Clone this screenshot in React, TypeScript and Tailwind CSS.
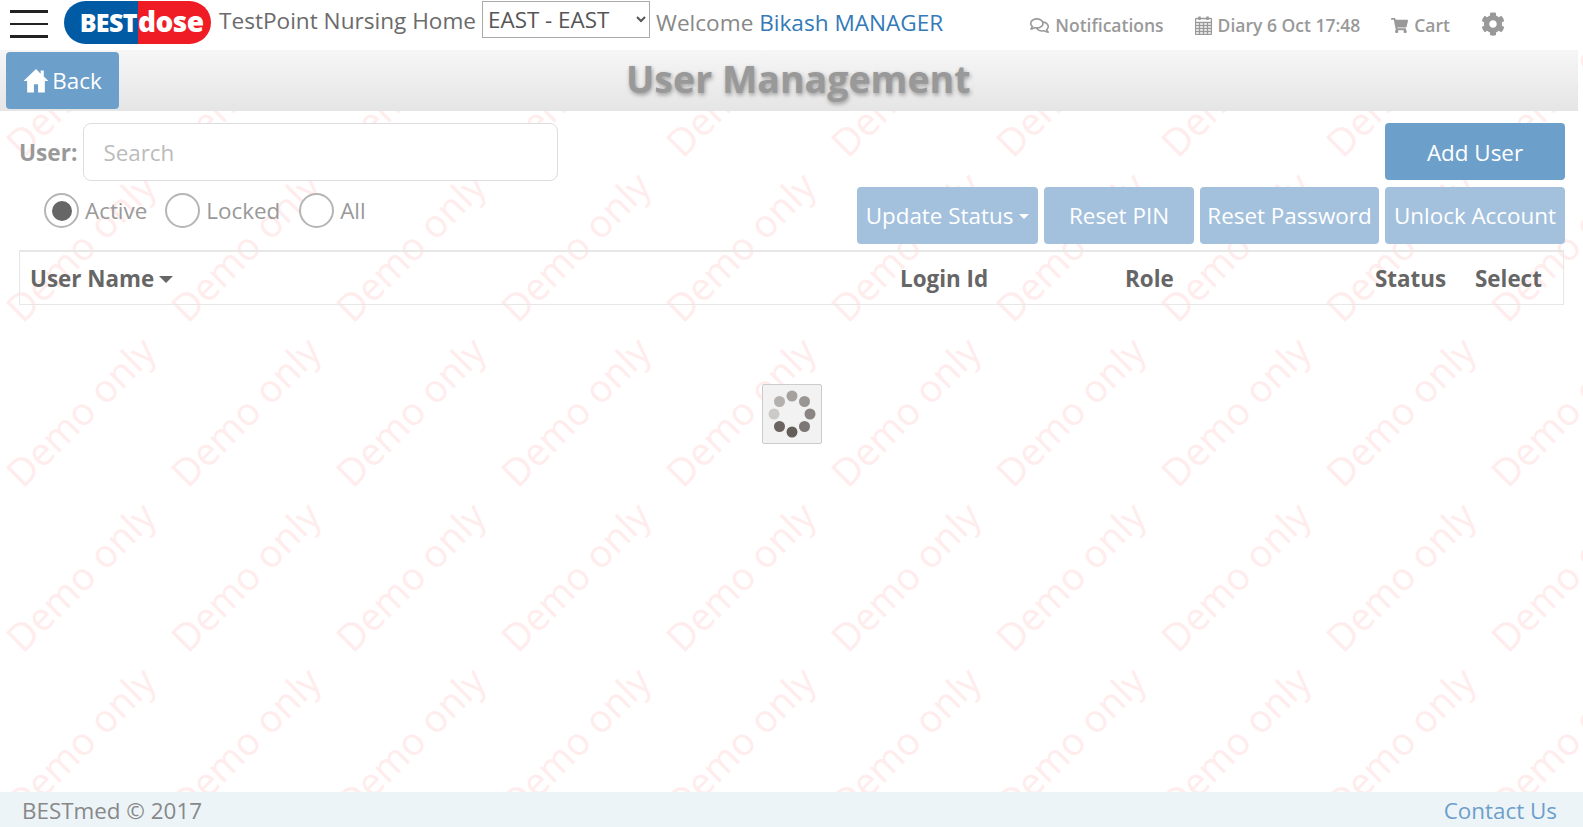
import React from 'react';
import { FaCog, FaRegComments, FaShoppingCart } from 'react-icons/fa';

const Caret = ({ className }: { className: string }) => (
    <span className={`inline-block w-0 h-0 border-x-[5px] border-x-transparent border-t-[5px] ${className}`} />
);

const HomeIcon = () => (
    <svg width="26" height="25" viewBox="0 0 25 24" fill="currentColor">
        <path d="M12.5 1L0.5 12.5H4V23.5H10.5V15.5H14.5V23.5H21V12.5H24.5L20 8.2V2.5H17V5.4Z" />
    </svg>
);

const CalendarIcon = () => (
    <svg width="17" height="19" viewBox="0 0 17 19" className="text-[#999]" fill="none" stroke="currentColor">
        <rect x="0.5" y="2.5" width="16" height="16" rx="1" strokeWidth="1.3" />
        <path d="M0.5 6.5H16.5M0.5 9.5H16.5M0.5 12.5H16.5M0.5 15.5H16.5M4.5 6.5V18.5M8.5 6.5V18.5M12.5 6.5V18.5" strokeWidth="1.3" />
        <path d="M4.5 0.5V4M12.5 0.5V4" strokeWidth="2.5" />
    </svg>
);

const Spinner = () => {
    const dots = [
        { x: 29, y: 11, c: '#a5a19f' },
        { x: 41.5, y: 16.5, c: '#999592' },
        { x: 47, y: 29, c: '#8a8583' },
        { x: 41.5, y: 41.5, c: '#7c7674' },
        { x: 29, y: 47, c: '#645e5b' },
        { x: 16.5, y: 41.5, c: '#6b6461' },
        { x: 11, y: 29, c: '#cccac9' },
        { x: 16.5, y: 16.5, c: '#b3b0ae' },
    ];
    return (
        <svg width="58" height="58" viewBox="0 0 58 58">
            {dots.map((d) => (
                <circle key={`${d.x}-${d.y}`} cx={d.x} cy={d.y} r="5.5" fill={d.c} />
            ))}
        </svg>
    );
};

const Radio = ({ label, checked }: { label: string; checked?: boolean }) => (
    <div className="flex items-center gap-[6px]">
        <span className="flex items-center justify-center w-[35px] h-[35px] rounded-full border-2 border-[#b5b5b5] bg-white">
            {checked && <span className="w-[20px] h-[20px] rounded-full bg-[#666]" />}
        </span>
        <span className="pt-px text-[#999] text-[22.4px] leading-none">{label}</span>
    </div>
);

const ActionButton = ({ width, children }: { width: string; children: React.ReactNode }) => (
    <button className={`${width} h-[57px] pt-px flex items-center justify-center gap-[6px] rounded-[4px] bg-[#a3c1dd] text-white text-[22.4px] whitespace-nowrap`}>
        {children}
    </button>
);

const App = () => {
    const cells = Array.from({ length: 66 }, (_, i) => i);

    return (
        <div className="relative h-[827px] w-[1583px] overflow-hidden bg-white font-['Open_Sans',sans-serif] flex flex-col">
            {/* Demo watermark, behind everything */}
            <div className="absolute -left-[3px] -top-[2px] w-[1815px] flex flex-wrap pointer-events-none">
                {cells.map((i) => (
                    <div key={i} className="w-[165px] h-[165px] flex items-center justify-center">
                        <span className="-rotate-45 whitespace-nowrap text-[38px] leading-none text-[#ffecec]">Demo only</span>
                    </div>
                ))}
            </div>

            {/* Top bar */}
            <header className="relative h-[50px] bg-white flex items-start shrink-0">
                <div className="ml-[10px] mt-[10px] w-[38px] flex flex-col gap-[10px]">
                    <span className="h-[3px] bg-[#222]" />
                    <span className="h-[2px] bg-[#222]" />
                    <span className="h-[3px] bg-[#222]" />
                </div>
                <div className="ml-[16px] mt-px w-[147px] h-[43px] rounded-full overflow-hidden flex items-center font-extrabold text-white leading-none">
                    <div className="w-[74px] h-full bg-[#005ba4] flex items-center justify-end pr-[1px] text-[25px] tracking-[-0.6px]">BEST</div>
                    <div className="flex-1 h-full bg-[#ef1c25] flex items-center pb-[4px] text-[28px] tracking-[-0.5px]">dose</div>
                </div>
                <span className="ml-[8px] mt-[4px] text-[22.6px] text-[#6b6b6b] whitespace-nowrap">TestPoint Nursing Home</span>
                <select className="ml-[6px] mt-px w-[168px] h-[37px] border border-[#aaa] bg-white pl-px text-[22.4px] text-[#555]">
                    <option>EAST - EAST</option>
                </select>
                <span className="ml-[6px] mt-[6px] text-[22.6px] text-[#888] whitespace-nowrap">
                    Welcome <span className="text-[#337ab7]">Bikash MANAGER</span>
                </span>
                <div className="ml-[87px] mt-[12px] flex items-center gap-[6px] text-[17.5px] font-semibold text-[#999] whitespace-nowrap">
                    <FaRegComments className="text-[19px]" />
                    Notifications
                </div>
                <div className="ml-[31px] mt-[12px] flex items-center gap-[6px] text-[17.5px] font-semibold text-[#999] whitespace-nowrap">
                    <CalendarIcon />
                    Diary 6 Oct 17:48
                </div>
                <div className="ml-[31px] mt-[12px] flex items-center gap-[6px] text-[17.5px] font-semibold text-[#999] whitespace-nowrap">
                    <FaShoppingCart className="text-[17px]" />
                    Cart
                </div>
                <FaCog className="ml-[31px] mt-[12px] text-[24px] text-[#999]" />
            </header>

            {/* Title band */}
            <div className="relative w-[1578px] h-[61px] shrink-0 bg-gradient-to-b from-[#f6f6f6] to-[#e5e5e5] flex pl-[6px] pt-[2px]">
                <button className="w-[113px] h-[57px] rounded-[4px] bg-[#6d9fcb] text-white text-[22.4px] flex items-center justify-center gap-[3px]">
                    <HomeIcon />
                    Back
                </button>
                <h1 className="ml-[507px] mt-[4px] text-[37.5px] font-bold text-[#999] leading-[46px] [text-shadow:1px_2px_4px_rgba(0,0,0,0.35)]">User Management</h1>
            </div>

            {/* Filters + actions */}
            <div className="relative px-[18px] pt-[12px] flex justify-between">
                <div className="w-[540px] pl-[1px]">
                    <div className="flex items-center gap-[6px]">
                        <label className="pt-[2px] text-[22.6px] font-bold text-[#999]">User:</label>
                        <input placeholder="Search" className="w-[477px] h-[58px] rounded-[8px] border border-[#ddd] bg-white px-[19px] text-[22.4px] placeholder:text-[#bbb]" />
                    </div>
                    <div className="ml-[25px] mt-[12px] flex items-center gap-[18px]">
                        <Radio label="Active" checked />
                        <Radio label="Locked" />
                        <div className="ml-px">
                            <Radio label="All" />
                        </div>
                    </div>
                </div>
                <div className="flex flex-col items-end gap-[7px]">
                    <button className="w-[180px] h-[57px] pt-[2px] rounded-[4px] bg-[#6d9fcb] text-white text-[22.4px]">Add User</button>
                    <div className="flex gap-[6px]">
                        <ActionButton width="w-[181px]">
                            Update Status
                            <Caret className="border-t-white" />
                        </ActionButton>
                        <ActionButton width="w-[150px]">Reset PIN</ActionButton>
                        <ActionButton width="w-[179px]">Reset Password</ActionButton>
                        <ActionButton width="w-[180px]">Unlock Account</ActionButton>
                    </div>
                </div>
            </div>

            {/* Table head */}
            <div className="relative mx-[19px] mt-[6px] h-[55px] shrink-0 grid grid-cols-[870px_225px_250px_100px_1fr] items-center pl-[10px] pt-[2px] border border-t-2 border-[#e7e7e7] text-[22.4px] font-bold text-[#666] leading-none">
                <div className="flex items-center gap-[5px]">
                    User Name
                    <Caret className="border-x-[7px] border-t-[7px] border-t-[#666]" />
                </div>
                <div>Login Id</div>
                <div>Role</div>
                <div>Status</div>
                <div>Select</div>
            </div>

            {/* Loading */}
            <div className="relative flex-1 flex justify-center items-start pt-[79px]">
                <div className="w-[60px] h-[60px] flex items-center justify-center rounded-[2px] border border-[#ccc] bg-[#f2f2f2]">
                    <Spinner />
                </div>
            </div>

            {/* Footer */}
            <footer className="relative h-[35px] shrink-0 bg-[#edf4f8] flex items-center justify-between pl-[22px] pr-[26px] pt-[2px] text-[22.4px]">
                <span className="text-[#888]">BESTmed © 2017</span>
                <a className="text-[#6d9fcb]">Contact Us</a>
            </footer>
        </div>
    );
};

export default App;
